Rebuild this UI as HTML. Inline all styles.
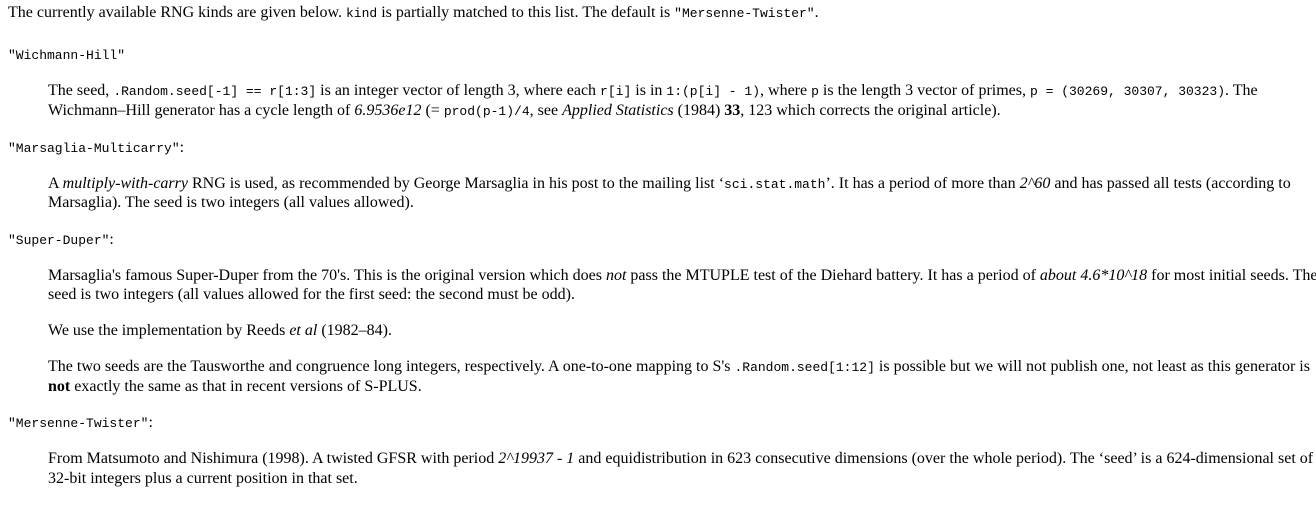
<!DOCTYPE html>
<html><head><meta charset="utf-8"><style>
html,body{margin:0;padding:0;background:#fff;}
body{width:1316px;height:509px;overflow:hidden;position:relative;font-family:"Liberation Serif",serif;font-size:16px;color:#000;}
.l{position:absolute;white-space:nowrap;line-height:20px;}
code{font-family:"Liberation Mono",monospace;font-size:13px;}
.i{left:48px}
.o{left:8px}
</style></head><body>
<div class="l o" style="top:3px">The currently available RNG kinds are given below. <code>kind</code> is partially matched to this list. The default is <code>"Mersenne-Twister"</code>.</div>
<div class="l o" style="top:45px"><code>"Wichmann-Hill"</code></div>
<div class="l i" style="top:81px">The seed, <code>.Random.seed[-1] == r[1:3]</code> is an integer vector of length 3, where each <code>r[i]</code> is in <code>1:(p[i] - 1)</code>, where <code>p</code> is the length 3 vector of primes, <code>p = (30269, 30307, 30323)</code>. The</div>
<div class="l i" style="top:101px">Wichmann–Hill generator has a cycle length of <i>6.9536e12</i> (= <code>prod(p-1)/4</code>, see <i>Applied Statistics</i> (1984) <b>33</b>, 123 which corrects the original article).</div>
<div class="l o" style="top:138px"><code>"Marsaglia-Multicarry"</code>:</div>
<div class="l i" style="top:174px">A <i>multiply-with-carry</i> RNG is used, as recommended by George Marsaglia in his post to the mailing list ‘<code>sci.stat.math</code>’. It has a period of more than <i>2^60</i> and has passed all tests (according to</div>
<div class="l i" style="top:193px">Marsaglia). The seed is two integers (all values allowed).</div>
<div class="l o" style="top:230px"><code>"Super-Duper"</code>:</div>
<div class="l i" style="top:266px">Marsaglia's famous Super-Duper from the 70's. This is the original version which does <i>not</i> pass the MTUPLE test of the Diehard battery. It has a period of <i>about 4.6*10^18</i> for most initial seeds. The</div>
<div class="l i" style="top:285px">seed is two integers (all values allowed for the first seed: the second must be odd).</div>
<div class="l i" style="top:321px">We use the implementation by Reeds <i>et al</i> (1982–84).</div>
<div class="l i" style="top:357px">The two seeds are the Tausworthe and congruence long integers, respectively. A one-to-one mapping to S's <code>.Random.seed[1:12]</code> is possible but we will not publish one, not least as this generator is</div>
<div class="l i" style="top:377px"><b>not</b> exactly the same as that in recent versions of S-PLUS.</div>
<div class="l o" style="top:413px"><code>"Mersenne-Twister"</code>:</div>
<div class="l i" style="top:449px">From Matsumoto and Nishimura (1998). A twisted GFSR with period <i>2^19937 - 1</i> and equidistribution in 623 consecutive dimensions (over the whole period). The ‘seed’ is a 624-dimensional set of</div>
<div class="l i" style="top:469px">32-bit integers plus a current position in that set.</div>
</body></html>
